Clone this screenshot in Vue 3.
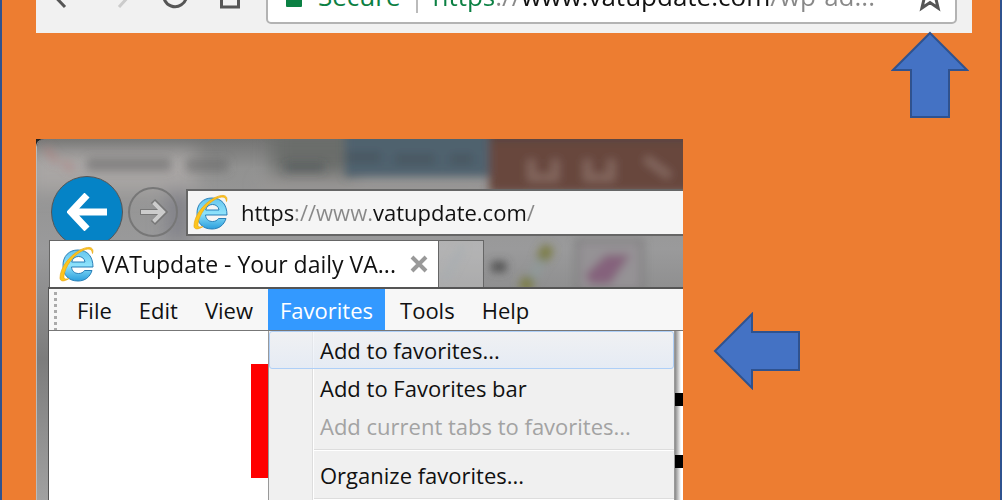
<script setup>
import { ref } from 'vue'

const chromeUrl = ref('https://www.vatupdate.com/wp-ad...')
const ieUrl = ref('https://www.vatupdate.com/')
const menus = ['File', 'Edit', 'View', 'Favorites', 'Tools', 'Help']
const openMenu = ref('Favorites')
</script>

<template>
  <main class="slide">
    <header class="chrome">
      <div class="chrome-bar">
        <div class="navs">
          <button class="nav" aria-label="Back">
            <svg width="28" height="28" viewBox="0 0 28 28"><path d="M16 2 5 13.500l11 11.500M5 13h23" /></svg>
          </button>
          <button class="nav faint" aria-label="Forward">
            <svg width="28" height="28" viewBox="0 0 28 28"><path d="M14 2l11 11-11 12M25 13H2" /></svg>
          </button>
          <button class="nav" aria-label="Reload">
            <svg width="28" height="28" viewBox="0 0 28 28"><path d="M23 6A11.500 11.500 0 1 0 25.500 14M25 2v8h-8" /></svg>
          </button>
          <button class="nav" aria-label="Home">
            <svg width="28" height="28" viewBox="0 0 28 28"><path d="M1 14 13 2l12 12M4.500 12v13h17V12" /></svg>
          </button>
        </div>
        <div class="omnibox">
          <svg class="lock" width="16" height="28" viewBox="0 0 16 28"><path d="M4 12V8a4 4 0 0 1 8 0v4" fill="none" stroke="#0b8043" stroke-width="2" /><rect y="10" width="16" height="15" rx="1" fill="#0b8043" /></svg>
          <label class="secure" for="omni">Secure</label>
          <span class="divider"></span>
          <input id="omni" v-model="chromeUrl" class="chrome-url" aria-label="Address and search bar" />
          <button class="star" aria-label="Bookmark this page">
            <svg width="30" height="32" viewBox="0 0 30 32"><path d="M15 3l3.500 8.500 9.500.8-7.200 6 2.300 9.700-8.100-5.500L6.900 28l2.300-9.700-7.200-6 9.500-.8z" /></svg>
          </button>
        </div>
      </div>
    </header>

    <div class="up-row">
      <svg class="arrow" width="78" height="88" viewBox="0 0 78 88"><path d="M39 2 76 39H58V86H20V39H2z" /></svg>
    </div>

    <div class="ie-row">
      <section class="ie">
        <svg class="glass" viewBox="0 0 647 361" preserveAspectRatio="none" aria-hidden="true">
          <defs>
            <linearGradient id="base" x1="0" y1="0" x2="0" y2="1">
              <stop offset="0" stop-color="#747473" /><stop offset=".08" stop-color="#929291" />
              <stop offset=".3" stop-color="#9a9a9b" /><stop offset=".6" stop-color="#7c7c7c" /><stop offset="1" stop-color="#a2a2a2" />
            </linearGradient>
            <filter id="soft" filterUnits="userSpaceOnUse" x="-50" y="-50" width="750" height="450"><feGaussianBlur stdDeviation="9" /></filter>
            <filter id="fine" filterUnits="userSpaceOnUse" x="-50" y="-50" width="750" height="450"><feGaussianBlur stdDeviation="4" /></filter>
          </defs>
          <rect width="647" height="361" fill="url(#base)" />
          <g filter="url(#soft)">
            <rect x="-10" y="12" width="170" height="40" fill="#a9a6a4" />
            <rect x="235" y="-10" width="85" height="46" fill="#6b6d6b" />
            <rect x="225" y="43" width="228" height="8" fill="#a09b99" />
            <rect x="130" y="50" width="22" height="50" fill="#818188" />
          </g>
          <g filter="url(#fine)">
            <rect x="308" y="-20" width="145" height="57" fill="#50626e" />
            <rect x="453" y="-8" width="210" height="61" fill="#68463d" />
            <path d="M454-7H660V2H454z" fill="#574542" />
            <path d="M50 25h84M149 26h42" stroke="#666" stroke-width="13" opacity=".55" />
            <path d="M8 8l12 15M26 22l10 9" stroke="#b87977" stroke-width="7" opacity=".4" />
            <path d="M249 28h38M309 18h35M359 20h39M414 20h22" stroke="#3e4b51" stroke-width="9" opacity=".45" />
            <path d="M495 20v18h24V20M551 20v18h24V20M609 19l25 18" fill="none" stroke="#a08980" stroke-width="8" opacity=".5" />
            <path d="M408 140l18-34" stroke="#879299" stroke-width="4" />
            <path d="M455 126h15" stroke="#505050" stroke-width="10" />
            <path d="M493 143l16-30" stroke="#8f9a99" stroke-width="8" />
            <path d="M487 149l7-12M505 119l8-13" stroke="#7c7d45" stroke-width="12" />
            <path d="M541 100h65v50h-65z" fill="#959295" stroke="#777" stroke-width="3" />
            <path d="M549 134l21-20h24l-20 29h-20z" fill="#85627b" />
          </g>
        </svg>

        <div class="toolbar">
          <button class="back" aria-label="Back">
            <svg width="40" height="38" viewBox="0 0 40 38"><path d="M20 2 4 19l16 17M5 19h35" fill="none" stroke="#fff" stroke-width="7" /></svg>
          </button>
          <button class="forward" aria-label="Forward">
            <svg width="30" height="28" viewBox="0 0 30 28"><path d="M15 3l11 11-11 11M25 14H2" fill="none" stroke="#777" stroke-width="6" /><path d="M15.500 4.500l9.500 9.500-9.500 9.500M25 14H3" fill="none" stroke="#ccc" stroke-width="4" /></svg>
          </button>
          <div class="address">
            <svg class="e-logo" width="36" height="38" viewBox="0 0 36 38">
              <defs><linearGradient id="eblue" x1="0" y1="0" x2="0" y2="1"><stop offset="0" stop-color="#65c5ee" /><stop offset=".5" stop-color="#8ee2fb" /><stop offset="1" stop-color="#2b9edc" /></linearGradient></defs>
              <path d="M34 22H12.500c.4 4 3 6.500 7 6.500 2.700 0 4.700-1 6-3h7.500C31 32 26 36 19 36 9.500 36 4 30 4 20.500S10 5 19 5c9.500 0 15 6.500 15 17zM12.700 17H26c-.5-3.500-3-5.500-6.500-5.500S13.500 13.500 12.700 17z" fill="url(#eblue)" stroke="#287fb8" stroke-width="1" />
              <path d="M33.500 8.500C35.500 2 30 .5 21 5 10 11 1 23 1 33c0 3.500 4 4 9 .5-4 1.200-5.500.5-5-3C6.500 21 14 11 22 6.500c7-4 11-3 11.500 2z" fill="#fdc51c" stroke="#e9a613" stroke-width=".7" />
            </svg>
            <input v-model="ieUrl" class="ie-url" aria-label="Address" />
          </div>
        </div>

        <div class="tabs">
          <div class="tab">
            <svg class="e-logo" width="36" height="38" viewBox="0 0 36 38">
              <path d="M34 22H12.500c.4 4 3 6.500 7 6.500 2.700 0 4.700-1 6-3h7.500C31 32 26 36 19 36 9.500 36 4 30 4 20.500S10 5 19 5c9.500 0 15 6.500 15 17zM12.700 17H26c-.5-3.500-3-5.500-6.500-5.500S13.500 13.500 12.700 17z" fill="url(#eblue)" stroke="#287fb8" stroke-width="1" />
              <path d="M33.500 8.500C35.500 2 30 .5 21 5 10 11 1 23 1 33c0 3.500 4 4 9 .5-4 1.200-5.500.5-5-3C6.500 21 14 11 22 6.500c7-4 11-3 11.500 2z" fill="#fdc51c" stroke="#e9a613" stroke-width=".7" />
            </svg>
            <span class="tab-title">VATupdate - Your daily VA...</span>
            <button class="close" aria-label="Close tab">
              <svg width="18" height="18" viewBox="0 0 18 18"><path d="M2 2l14 14M16 2 2 16" stroke="#999" stroke-width="4" /></svg>
            </button>
          </div>
          <button class="new-tab" aria-label="New tab"></button>
        </div>

        <div class="client">
          <nav class="menubar">
            <span class="grip"></span>
            <button v-for="m in menus" :key="m" class="menu" :class="{ open: m === openMenu }" @click="openMenu = m">{{ m }}</button>
          </nav>
          <div class="page">
            <div class="red"></div>
            <div class="dropdown" role="menu">
              <button class="item active" role="menuitem">Add to favorites...</button>
              <button class="item" role="menuitem">Add to Favorites bar</button>
              <button class="item" role="menuitem" disabled>Add current tabs to favorites...</button>
              <hr />
              <button class="item" role="menuitem">Organize favorites...</button>
              <hr />
            </div>
            <div class="edge"><i></i><i></i></div>
          </div>
        </div>
      </section>
      <svg class="arrow left" width="88" height="78" viewBox="0 0 88 78"><path d="M2 39 39 2V20H86V58H39V76z" /></svg>
    </div>
  </main>
</template>

<style>
html, body { margin: 0; height: 100%; overflow: hidden; }
</style>

<style scoped>
* { box-sizing: border-box; }
button, input {
  font: inherit;
  color: inherit;
  margin: 0;
  padding: 0;
  border: 0;
  background: none;
  outline: 0;
}
svg { display: block; flex: none; }
.slide {
  height: 100vh;
  overflow: hidden;
  padding: 0 28px 0 34px;
  background: #ed7d31;
  border: solid #2f528f;
  border-width: 0 2px;
  font: 22px/30px "Open Sans", "Noto Sans", sans-serif;
  color: #111;
}
.chrome {
  height: 33px;
  display: flex;
  align-items: flex-end;
  overflow: hidden;
  background: #f1f1f1;
}
.chrome-bar {
  flex: 1;
  display: flex;
  align-items: center;
  gap: 21px;
  padding: 0 15px 9px 13px;
  font-size: 26px;
}
.navs { display: flex; gap: 28px; }
.nav svg { fill: none; stroke: #555; stroke-width: 3; }
.nav.faint svg { stroke: #ccc; }
.omnibox {
  flex: 1;
  min-width: 0;
  height: 56px;
  display: flex;
  align-items: center;
  padding: 0 10px 0 18px;
  background: #fff;
  border: 2px solid #b3b3b3;
  border-radius: 5px;
}
.secure { margin: 0 16px; color: #0b8043; }
.divider { width: 2px; height: 34px; background: #bbb; }
.chrome-url {
  flex: 1;
  min-width: 0;
  margin-left: 14px;
  height: 36px;
  color: transparent;
  background: linear-gradient(90deg, #0b8043 63px, #888 63px 89px, #111 89px 337px, #888 337px);
  -webkit-background-clip: text;
  background-clip: text;
}
.star svg { fill: none; stroke: #555; stroke-width: 3; }
.up-row {
  display: flex;
  justify-content: flex-end;
  margin-top: -2px;
  padding-right: 3px;
  position: relative;
}
.arrow { fill: #4472c4; stroke: #2f528f; stroke-width: 2; }
.ie-row {
  display: grid;
  grid-template-columns: 647fr 289fr;
  margin-top: 20px;
}
.arrow.left { margin: 173px 0 0 30px; }
.ie {
  position: relative;
  overflow: hidden;
  padding: 37px 0 0 12px;
  background: #222;
}
.glass {
  position: absolute;
  inset: 0;
  width: 100%;
  height: 100%;
  border-left: 1px solid #bbb;
  border-radius: 8px 0 0 0;
}
.toolbar {
  position: relative;
  display: flex;
  align-items: center;
  padding-left: 3px;
}
.back {
  width: 72px;
  height: 72px;
  display: grid;
  place-items: center;
  border-radius: 50%;
  background: #0583c6;
  border: 1px solid #555;
}
.forward {
  width: 50px;
  height: 50px;
  display: grid;
  place-items: center;
  margin: 0 8px 0 5px;
  border: 2px solid #777;
  border-radius: 50%;
}
.address {
  flex: 1;
  min-width: 0;
  height: 47px;
  display: flex;
  align-items: center;
  gap: 12px;
  padding-left: 5px;
  background: #f5f5f5;
  border: 2px solid #666;
  border-right: 0;
}
.ie-url {
  flex: 1;
  min-width: 0;
  height: 32px;
  color: transparent;
  background: linear-gradient(90deg, #111 53px, #888 53px 131px, #111 131px 285px, #888 285px);
  -webkit-background-clip: text;
  background-clip: text;
}
.tabs { position: relative; display: flex; margin-top: -8px; padding-left: 1px; height: 47px; }
.tab {
  width: 390px;
  display: flex;
  align-items: center;
  padding: 0 10px 0 9px;
  background: #fff;
  border: solid #666;
  border-width: 1px 1px 0;
}
.tab-title { flex: 1; margin-left: 6px; font-size: 23px; white-space: nowrap; }
.new-tab { width: 45px; background: #ffffff40; border: solid #666; border-width: 1px 1px 0 0; }
.client { position: relative; border: solid #555; border-width: 2px 0 0 1px; background: #fff; }
.menubar {
  height: 42px;
  display: flex;
  align-items: stretch;
  gap: 3px;
  background: #f7f7f7;
  border-bottom: 1px solid #777;
}
.grip { width: 3px; margin: 3px 5px 0; background: repeating-linear-gradient(#aaa 0 3px, transparent 3px 6px); }
.menu { padding: 0 12px; }
.menu.open { background: #3399ff; color: #fff; }
.page { display: flex; padding-left: 202px; }
.red { width: 17px; height: 114px; margin-top: 33px; background: #f00; }
.dropdown {
  flex: 1;
  border: solid #999;
  border-width: 0 1px;
  background: linear-gradient(90deg, transparent 43px, #ddd 43px 44px, #fff 44px 45px, transparent 45px), #f0f0f0;
}
.item {
  display: block;
  width: 100%;
  height: 38px;
  padding-left: 50px;
  border: 1px solid transparent;
  border-radius: 3px;
  text-align: left;
  white-space: nowrap;
}
.item.active { border-color: #aecff7; background: linear-gradient(#f0f2f680, #dfe8f6a0); }
.item:disabled { color: #a3a3a3; }
hr { height: 2px; margin: 4px 0 5px 45px; border: 0; background: linear-gradient(#ddd 50%, #fff 50%); }
.edge { width: 8px; padding-top: 13px; background: linear-gradient(90deg, #888, #fff 6px); }
.edge i { display: block; height: 13px; margin-top: 49px; background: #000; }
</style>
